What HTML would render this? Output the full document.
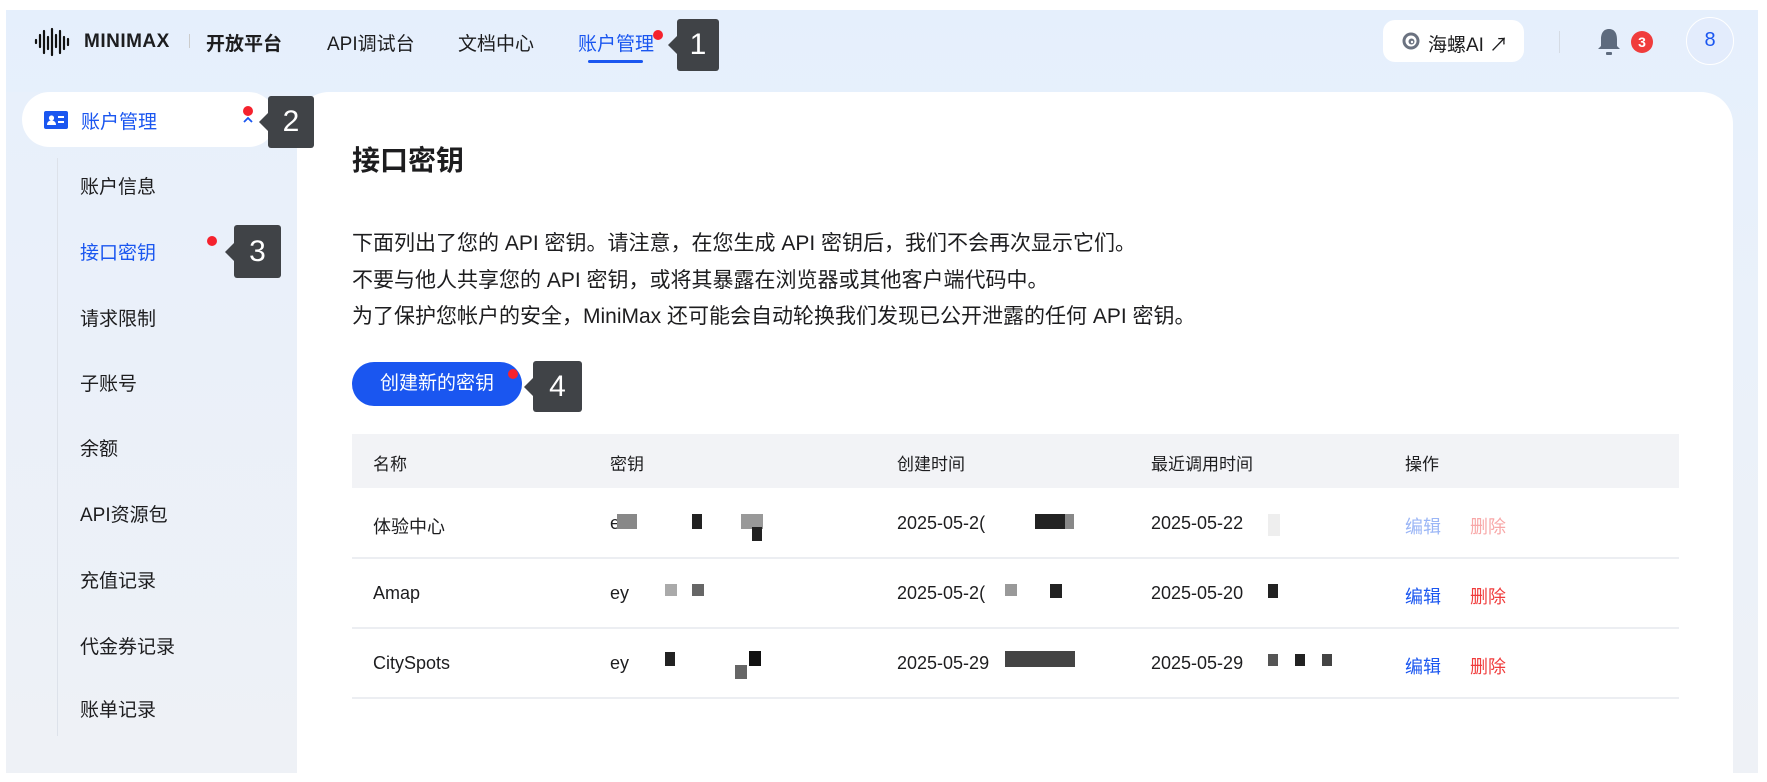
<!DOCTYPE html>
<html><head><meta charset="utf-8"><style>
*{margin:0;padding:0;box-sizing:border-box}
body{width:1767px;height:781px;background:#fff;font-family:"Liberation Sans","Noto Sans CJK SC",sans-serif;color:#1d1d1f;position:relative;overflow:hidden}
.bg{position:absolute;left:6px;top:10px;width:1752px;height:763px;background:linear-gradient(180deg,#e5effc 0%,#eaf1fa 40%,#eef1f6 100%)}
.a{position:absolute;white-space:nowrap}
.nav{font-size:19px;top:29px}
.badge{position:absolute;background:#404347;color:#fff;font-size:30px;display:flex;align-items:center;justify-content:center;border-radius:3px;z-index:5}
.badge:before{content:"";position:absolute;left:-9px;top:50%;margin-top:-9px;border:9px solid transparent;border-left:0;border-right-color:#404347}
.dot{position:absolute;width:10px;height:10px;border-radius:50%;background:#f5222d;z-index:5}
.side{font-size:19px;left:80px}
.card{position:absolute;left:297px;top:92px;width:1436px;height:690px;background:#fff;border-radius:32px 32px 0 0}
.p{font-size:21px;left:352px}
.th{font-size:17px;top:450px}
.td{font-size:18px}
.blk{position:absolute}
</style></head><body>
<div class="bg"></div>
<div class="a" style="left:6px;top:92px;width:292px;height:681px;background:linear-gradient(180deg,#e8f0fb,#eef1f6)"></div>
<!-- logo -->
<svg class="a" style="left:34px;top:26px" width="40" height="32" viewBox="0 0 40 32"><path d="M2 17v-3M6 21V9M10 27V5M14 23V11M18 29V3M22 21V9M26 27V5M30 23V11M34 19V13" stroke="#111" stroke-width="2.2" fill="none" stroke-linecap="round"/></svg>
<div class="a" style="left:84px;top:31px;font-size:19px;font-weight:bold;letter-spacing:0.5px">MINIMAX</div>
<div class="a" style="left:189px;top:34px;width:1px;height:14px;background:#ccc"></div>
<div class="a nav" style="left:206px;font-weight:bold">开放平台</div>
<div class="a nav" style="left:327px">API调试台</div>
<div class="a nav" style="left:458px">文档中心</div>
<div class="a nav" style="left:578px;color:#1a56f0">账户管理</div>
<div class="a" style="left:588px;top:60px;width:55px;height:3px;background:#1a56f0;border-radius:2px"></div>
<div class="dot" style="left:653px;top:30px"></div>
<div class="badge" style="left:677px;top:19px;width:42px;height:52px">1</div>
<!-- right -->
<div class="a" style="left:1383px;top:20px;width:141px;height:42px;background:#fff;border-radius:12px"></div>
<svg class="a" style="left:1401px;top:31px" width="20" height="20" viewBox="0 0 20 20"><circle cx="10" cy="10" r="8.5" fill="#6b7280"/><circle cx="10" cy="10" r="5.5" fill="#fff"/><circle cx="10.5" cy="10.5" r="3" fill="#6b7280"/><circle cx="11" cy="11" r="1.2" fill="#fff"/></svg>
<div class="a" style="left:1428px;top:30px;font-size:19px">海螺AI ↗</div>
<div class="a" style="left:1559px;top:31px;width:1px;height:22px;background:#d5dbe4"></div>
<svg class="a" style="left:1596px;top:27px" width="26" height="30" viewBox="0 0 26 30"><path d="M13 2c-6 0-8 5-8 10v7l-3 3h22l-3-3v-7c0-5-2-10-8-10z" fill="#5e6b7e"/><rect x="10" y="25" width="6" height="3" rx="1" fill="#5e6b7e"/></svg>
<div class="a" style="left:1631px;top:31px;width:22px;height:22px;border-radius:50%;background:#f03c3c;color:#fff;font-size:14px;font-weight:bold;text-align:center;line-height:22px">3</div>
<div class="a" style="left:1686px;top:17px;width:48px;height:48px;border-radius:50%;background:#e3ecfc;border:1.5px solid #fff;color:#1a56f0;font-size:20px;text-align:center;line-height:45px">8</div>
<!-- sidebar -->
<div class="a" style="left:22px;top:92px;width:254px;height:55px;background:#fff;border-radius:28px"></div>
<svg class="a" style="left:44px;top:111px" width="24" height="18" viewBox="0 0 24 18"><rect width="24" height="18" rx="2" fill="#1a56f0"/><circle cx="7.5" cy="7" r="2.6" fill="#fff"/><path d="M3 14c0-3 2-4.5 4.5-4.5S12 11 12 14z" fill="#fff"/><rect x="14" y="5" width="6" height="2" fill="#fff"/><rect x="14" y="10" width="6" height="2" fill="#fff"/></svg>
<div class="a" style="left:81px;top:107px;font-size:19px;color:#1a56f0">账户管理</div>
<svg class="a" style="left:243px;top:116px" width="10" height="7" viewBox="0 0 10 7"><path d="M1 6l4-4 4 4" stroke="#1a56f0" stroke-width="1.8" fill="none"/></svg>
<div class="dot" style="left:243px;top:106px"></div>
<div class="badge" style="left:268px;top:96px;width:46px;height:52px">2</div>
<div class="a" style="left:57px;top:158px;width:1px;height:578px;background:#dde2ea"></div>
<div class="a side" style="top:172px">账户信息</div>
<div class="a side" style="top:238px;color:#1a56f0">接口密钥</div>
<div class="dot" style="left:207px;top:236px"></div>
<div class="badge" style="left:234px;top:225px;width:47px;height:53px">3</div>
<div class="a side" style="top:304px">请求限制</div>
<div class="a side" style="top:369px">子账号</div>
<div class="a side" style="top:434px">余额</div>
<div class="a side" style="top:500px">API资源包</div>
<div class="a side" style="top:566px">充值记录</div>
<div class="a side" style="top:632px">代金券记录</div>
<div class="a side" style="top:695px">账单记录</div>
<!-- card -->
<div class="card"></div>
<div class="a" style="left:352px;top:139px;font-size:28px;font-weight:bold">接口密钥</div>
<div class="a p" style="top:227px">下面列出了您的 API 密钥。请注意，在您生成 API 密钥后，我们不会再次显示它们。</div>
<div class="a p" style="top:264px">不要与他人共享您的 API 密钥，或将其暴露在浏览器或其他客户端代码中。</div>
<div class="a p" style="top:300px">为了保护您帐户的安全，MiniMax 还可能会自动轮换我们发现已公开泄露的任何 API 密钥。</div>
<div class="a" style="left:352px;top:362px;width:170px;height:44px;background:#1a56f0;border-radius:22px;color:#fff;font-size:19px;text-align:center;line-height:44px">创建新的密钥</div>
<div class="dot" style="left:508px;top:369px"></div>
<div class="badge" style="left:533px;top:361px;width:49px;height:51px">4</div>
<!-- table -->
<div class="a" style="left:352px;top:434px;width:1327px;height:54px;background:#f2f3f6"></div>
<div class="a th" style="left:373px">名称</div>
<div class="a th" style="left:610px">密钥</div>
<div class="a th" style="left:897px">创建时间</div>
<div class="a th" style="left:1151px">最近调用时间</div>
<div class="a th" style="left:1405px">操作</div>
<div class="a" style="left:352px;top:557px;width:1327px;height:2px;background:#eceef2"></div>
<div class="a" style="left:352px;top:627px;width:1327px;height:2px;background:#eceef2"></div>
<div class="a" style="left:352px;top:697px;width:1327px;height:2px;background:#eceef2"></div>

<div class="a td" style="left:373px;top:513px">体验中心</div>
<div class="a td" style="left:610px;top:513px">e</div>
<div class="blk" style="left:617px;top:514px;width:20px;height:15px;background:#888"></div>
<div class="blk" style="left:692px;top:514px;width:10px;height:15px;background:#222"></div>
<div class="blk" style="left:741px;top:514px;width:22px;height:15px;background:#999"></div>
<div class="blk" style="left:752px;top:527px;width:10px;height:14px;background:#222"></div>
<div class="a td" style="left:897px;top:513px">2025-05-2(</div>
<div class="blk" style="left:1035px;top:514px;width:30px;height:15px;background:#222"></div>
<div class="blk" style="left:1065px;top:514px;width:9px;height:15px;background:#888"></div>
<div class="a td" style="left:1151px;top:513px">2025-05-22</div>
<div class="blk" style="left:1268px;top:514px;width:12px;height:22px;background:#eee"></div>
<div class="a td" style="left:1405px;top:513px;color:#9bb6f6">编辑</div>
<div class="a td" style="left:1470px;top:513px;color:#f8a8a8">删除</div>

<div class="a td" style="left:373px;top:583px">Amap</div>
<div class="a td" style="left:610px;top:583px">ey</div>
<div class="blk" style="left:665px;top:584px;width:12px;height:12px;background:#aaa"></div>
<div class="blk" style="left:692px;top:584px;width:12px;height:12px;background:#666"></div>
<div class="a td" style="left:897px;top:583px">2025-05-2(</div>
<div class="blk" style="left:1005px;top:584px;width:12px;height:12px;background:#999"></div>
<div class="blk" style="left:1050px;top:584px;width:12px;height:14px;background:#222"></div>
<div class="a td" style="left:1151px;top:583px">2025-05-20</div>
<div class="blk" style="left:1268px;top:584px;width:10px;height:14px;background:#222"></div>
<div class="a td" style="left:1405px;top:583px;color:#1a56f0">编辑</div>
<div class="a td" style="left:1470px;top:583px;color:#f03c3c">删除</div>

<div class="a td" style="left:373px;top:653px">CitySpots</div>
<div class="a td" style="left:610px;top:653px">ey</div>
<div class="blk" style="left:665px;top:652px;width:10px;height:14px;background:#222"></div>
<div class="blk" style="left:749px;top:651px;width:12px;height:15px;background:#111"></div>
<div class="blk" style="left:735px;top:665px;width:12px;height:14px;background:#666"></div>
<div class="a td" style="left:897px;top:653px">2025-05-29</div>
<div class="blk" style="left:1005px;top:651px;width:70px;height:16px;background:#444"></div>
<div class="a td" style="left:1151px;top:653px">2025-05-29</div>
<div class="blk" style="left:1268px;top:654px;width:10px;height:12px;background:#555"></div>
<div class="blk" style="left:1295px;top:654px;width:10px;height:12px;background:#222"></div>
<div class="blk" style="left:1322px;top:654px;width:10px;height:12px;background:#444"></div>
<div class="a td" style="left:1405px;top:653px;color:#1a56f0">编辑</div>
<div class="a td" style="left:1470px;top:653px;color:#f03c3c">删除</div>
</body></html>
